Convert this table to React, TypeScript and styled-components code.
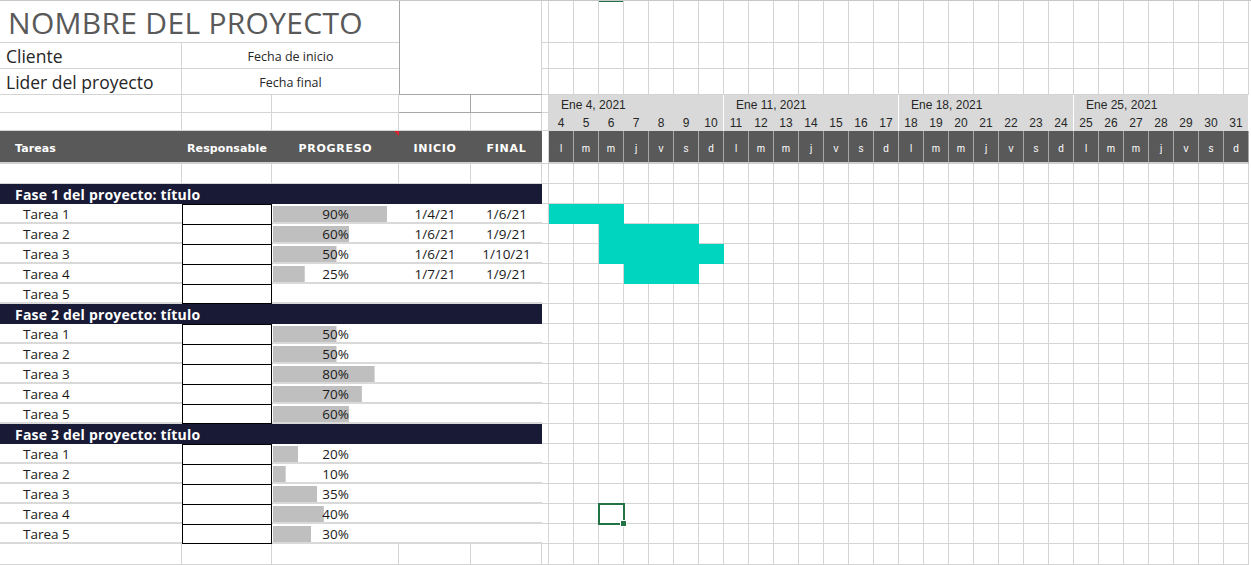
import React from "react";
import styled, { createGlobalStyle, css } from "styled-components";

const GRID = "#d4d4d4";
const TEAL = "#00d5bf";
const NAVY = "#191a36";
const DARK = "#595959";
const ROWS = "42px 26px 26px 18px 18px 33px 20px repeat(18, 20px) 21px";

const GlobalStyle = createGlobalStyle`
  html, body { margin: 0; padding: 0; background: #fff; }
  body { font-family: "Open Sans", "Noto Sans", sans-serif; color: #1a1a1a; }
`;

type Task = { name: string; pct?: number; start?: number; end?: number };
type Phase = { title: string; tasks: Task[] };

const phases: Phase[] = [
  {
    title: "Fase 1 del proyecto: título",
    tasks: [
      { name: "Tarea 1", pct: 90, start: 4, end: 6 },
      { name: "Tarea 2", pct: 60, start: 6, end: 9 },
      { name: "Tarea 3", pct: 50, start: 6, end: 10 },
      { name: "Tarea 4", pct: 25, start: 7, end: 9 },
      { name: "Tarea 5" },
    ],
  },
  {
    title: "Fase 2 del proyecto: título",
    tasks: [50, 50, 80, 70, 60].map((pct, i) => ({ name: `Tarea ${i + 1}`, pct })),
  },
  {
    title: "Fase 3 del proyecto: título",
    tasks: [20, 10, 35, 40, 30].map((pct, i) => ({ name: `Tarea ${i + 1}`, pct })),
  },
];

const weekdays = ["l", "m", "m", "j", "v", "s", "d"];
const days = Array.from({ length: 28 }, (_, i) => i + 4);
const weeks = ["Ene 4, 2021", "Ene 11, 2021", "Ene 18, 2021", "Ene 25, 2021"];

const Sheet = styled.div`
  display: flex;
  width: 1251px;
  height: 565px;
  overflow: hidden;
  border-top: 1px solid #c8c8c8;
  box-sizing: border-box;
  background: #fff;
`;

const LeftGrid = styled.div`
  flex: none;
  display: grid;
  grid-template-columns: 182px 90px 127px 72px 71px;
  grid-template-rows: ${ROWS};
`;

const GapGrid = styled.div`
  flex: none;
  display: grid;
  grid-template-columns: 7px;
  grid-template-rows: ${ROWS};
`;

const GanttGrid = styled.div`
  flex: none;
  display: grid;
  grid-template-columns: repeat(28, 25px);
  grid-template-rows: ${ROWS};
  font-family: "Liberation Sans", Arial, sans-serif;
`;

const Cell = styled.div`
  box-sizing: border-box;
  min-width: 0;
  border-right: 1px solid ${GRID};
  border-bottom: 1px solid ${GRID};
  display: flex;
  align-items: center;
  white-space: nowrap;
  overflow: hidden;
`;

const Title = styled(Cell)`
  grid-column: span 3;
  border-right: none;
  padding-left: 8px;
  padding-top: 1px;
  font-size: 30px;
  color: #595959;
  letter-spacing: 0.3px;
`;

const InfoBox = styled(Cell)`
  grid-column: span 2;
  grid-row: span 3;
  border-left: 1px solid #a6a6a6;
  border-bottom: 1px solid #a6a6a6;
`;

const InfoLabel = styled(Cell)`
  padding-left: 6px;
  font-size: 17.5px;
  color: #262626;
`;

const InfoDate = styled(Cell)`
  grid-column: span 2;
  border-right: none;
  justify-content: center;
  padding-top: 2px;
  font-size: 12.5px;
  color: #262626;
`;

const BoxedCell = styled(Cell)<{ $first?: boolean }>`
  border-bottom-color: #a6a6a6;
  border-right-color: ${(p) => (p.$first ? "#a6a6a6" : GRID)};
`;

const HeadCell = styled(Cell)<{ $align?: "left" | "center"; $note?: boolean; $caps?: boolean }>`
  position: relative;
  background: ${DARK};
  border-right: none;
  border-bottom: 2px solid #d0d0d0;
  padding-top: 3px;
  color: #fff;
  font-family: "DejaVu Sans", Verdana, sans-serif;
  font-weight: bold;
  font-size: 11px;
  letter-spacing: ${(p) => (p.$caps ? "0.7px" : "0.1px")};
  padding-left: ${(p) => (p.$align === "left" ? "15px" : "0")};
  justify-content: ${(p) => (p.$align === "left" ? "flex-start" : "center")};
  ${(p) =>
    p.$note &&
    css`
      &::after {
        content: "";
        position: absolute;
        top: 0;
        right: 0;
        border-top: 5px solid #e0202a;
        border-left: 5px solid transparent;
      }
    `}
`;

const PhaseCell = styled(Cell)`
  grid-column: span 5;
  background: ${NAVY};
  border: none;
  padding-left: 15px;
  color: #fff;
  font-weight: 700;
  font-size: 14px;
  letter-spacing: 0.2px;
`;

const TaskName = styled(Cell)`
  border-right: none;
  border-bottom: 2px solid #d9d9d9;
  padding-left: 23px;
  padding-top: 2px;
  font-size: 13.5px;
`;

const OwnerCell = styled.div<{ $last?: boolean }>`
  box-sizing: border-box;
  border: 1px solid #000;
  border-bottom: ${(p) => (p.$last ? "1px solid #000" : "none")};
  background: #fff;
`;

const ProgressCell = styled(Cell)`
  border-right: none;
  border-bottom: 2px solid #d9d9d9;
  justify-content: center;
  padding-top: 2px;
  font-size: 13.5px;
  background-image: linear-gradient(#bfbfbf, #bfbfbf);
  background-repeat: no-repeat;
  background-position: 1px 2px;
`;

const DateCell = styled(Cell)`
  border-right: none;
  border-bottom: 2px solid #d9d9d9;
  justify-content: center;
  padding-top: 2px;
  font-size: 13.5px;
`;

const DayCell = styled(Cell)<{ $fill?: boolean; $selected?: boolean; $active?: boolean }>`
  position: relative;
  overflow: visible;
  ${(p) =>
    p.$fill &&
    css`
      background: ${TEAL};
      border-color: ${TEAL};
    `}
  ${(p) =>
    p.$active &&
    css`
      box-shadow: 0 -1px 0 #217346, inset 0 1px 0 #217346;
    `}
  ${(p) =>
    p.$selected &&
    css`
      outline: 2px solid #217346;
      outline-offset: -1px;
      z-index: 2;
      &::after {
        content: "";
        position: absolute;
        right: -4px;
        bottom: -4px;
        width: 5px;
        height: 5px;
        background: #217346;
        border: 1px solid #fff;
      }
    `}
`;

const WeekCell = styled.div`
  grid-column: span 7;
  box-sizing: border-box;
  background: #d9d9d9;
  border-right: 1px solid #fff;
  display: flex;
  align-items: center;
  padding-left: 12px;
  padding-top: 2px;
  font-size: 12px;
  color: #262626;
`;

const DayNum = styled.div<{ $weekEnd?: boolean }>`
  box-sizing: border-box;
  background: #d9d9d9;
  border-right: 1px solid ${(p) => (p.$weekEnd ? "#fff" : "#d9d9d9")};
  display: flex;
  align-items: center;
  justify-content: center;
  padding-top: 1px;
  font-size: 12px;
  color: #262626;
`;

const WeekdayCell = styled.div`
  box-sizing: border-box;
  background: ${DARK};
  border-right: 1px solid #a8a8a8;
  border-bottom: 2px solid #d0d0d0;
  display: flex;
  align-items: center;
  justify-content: center;
  padding-top: 3px;
  font-size: 10px;
  color: #fff;
`;

function blanks(n: number, key: string) {
  return Array.from({ length: n }, (_, i) => <Cell key={`${key}-${i}`} />);
}

function LeftTable() {
  return (
    <LeftGrid>
      <Title>NOMBRE DEL PROYECTO</Title>
      <InfoBox />
      <InfoLabel>Cliente</InfoLabel>
      <InfoDate>Fecha de inicio</InfoDate>
      <InfoLabel>Lider del proyecto</InfoLabel>
      <InfoDate>Fecha final</InfoDate>
      {blanks(3, "r4")}
      <BoxedCell $first />
      <BoxedCell />
      {blanks(5, "r5")}
      <HeadCell $align="left">Tareas</HeadCell>
      <HeadCell>Responsable</HeadCell>
      <HeadCell $note $caps>PROGRESO</HeadCell>
      <HeadCell $caps>INICIO</HeadCell>
      <HeadCell $caps>FINAL</HeadCell>
      {blanks(5, "r7")}
      {phases.map((phase, pi) => (
        <React.Fragment key={pi}>
          <PhaseCell>{phase.title}</PhaseCell>
          {phase.tasks.map((t, ti) => (
            <React.Fragment key={ti}>
              <TaskName>{t.name}</TaskName>
              <OwnerCell $last={ti === phase.tasks.length - 1} />
              <ProgressCell style={t.pct != null ? { backgroundSize: `${t.pct}% 16px` } : { backgroundImage: "none" }}>
                {t.pct != null ? `${t.pct}%` : ""}
              </ProgressCell>
              <DateCell>{t.start ? `1/${t.start}/21` : ""}</DateCell>
              <DateCell>{t.end ? `1/${t.end}/21` : ""}</DateCell>
            </React.Fragment>
          ))}
        </React.Fragment>
      ))}
      {blanks(5, "last")}
    </LeftGrid>
  );
}

function GapColumn() {
  return <GapGrid>{blanks(26, "gap")}</GapGrid>;
}

function Gantt() {
  const bodyRows: Task[] = [];
  phases.forEach((p) => {
    bodyRows.push({ name: p.title });
    p.tasks.forEach((t) => bodyRows.push(t));
  });
  const selectedRow = 12 + 4; // Fase 3 header at 12, Tarea 4 at 16
  const selectedCol = 2;
  return (
    <GanttGrid>
      {[0, 1, 2].map((r) =>
        days.map((d, c) => <DayCell key={`t${r}-${d}`} $active={r === 0 && c === selectedCol} />)
      )}
      {weeks.map((w) => (
        <WeekCell key={w}>{w}</WeekCell>
      ))}
      {days.map((d, i) => (
        <DayNum key={`n${d}`} $weekEnd={i % 7 === 6}>
          {d}
        </DayNum>
      ))}
      {days.map((d, i) => (
        <WeekdayCell key={`w${d}`}>{weekdays[i % 7]}</WeekdayCell>
      ))}
      {days.map((d) => (
        <DayCell key={`b${d}`} />
      ))}
      {bodyRows.map((t, r) =>
        days.map((d, c) => (
          <DayCell
            key={`g${r}-${d}`}
            $fill={t.start != null && t.end != null && d >= t.start && d <= t.end}
            $selected={r === selectedRow && c === selectedCol}
          />
        ))
      )}
      {days.map((d) => (
        <DayCell key={`l${d}`} />
      ))}
    </GanttGrid>
  );
}

export default function App() {
  return (
    <>
      <GlobalStyle />
      <Sheet>
        <LeftTable />
        <GapColumn />
        <Gantt />
      </Sheet>
    </>
  );
}
